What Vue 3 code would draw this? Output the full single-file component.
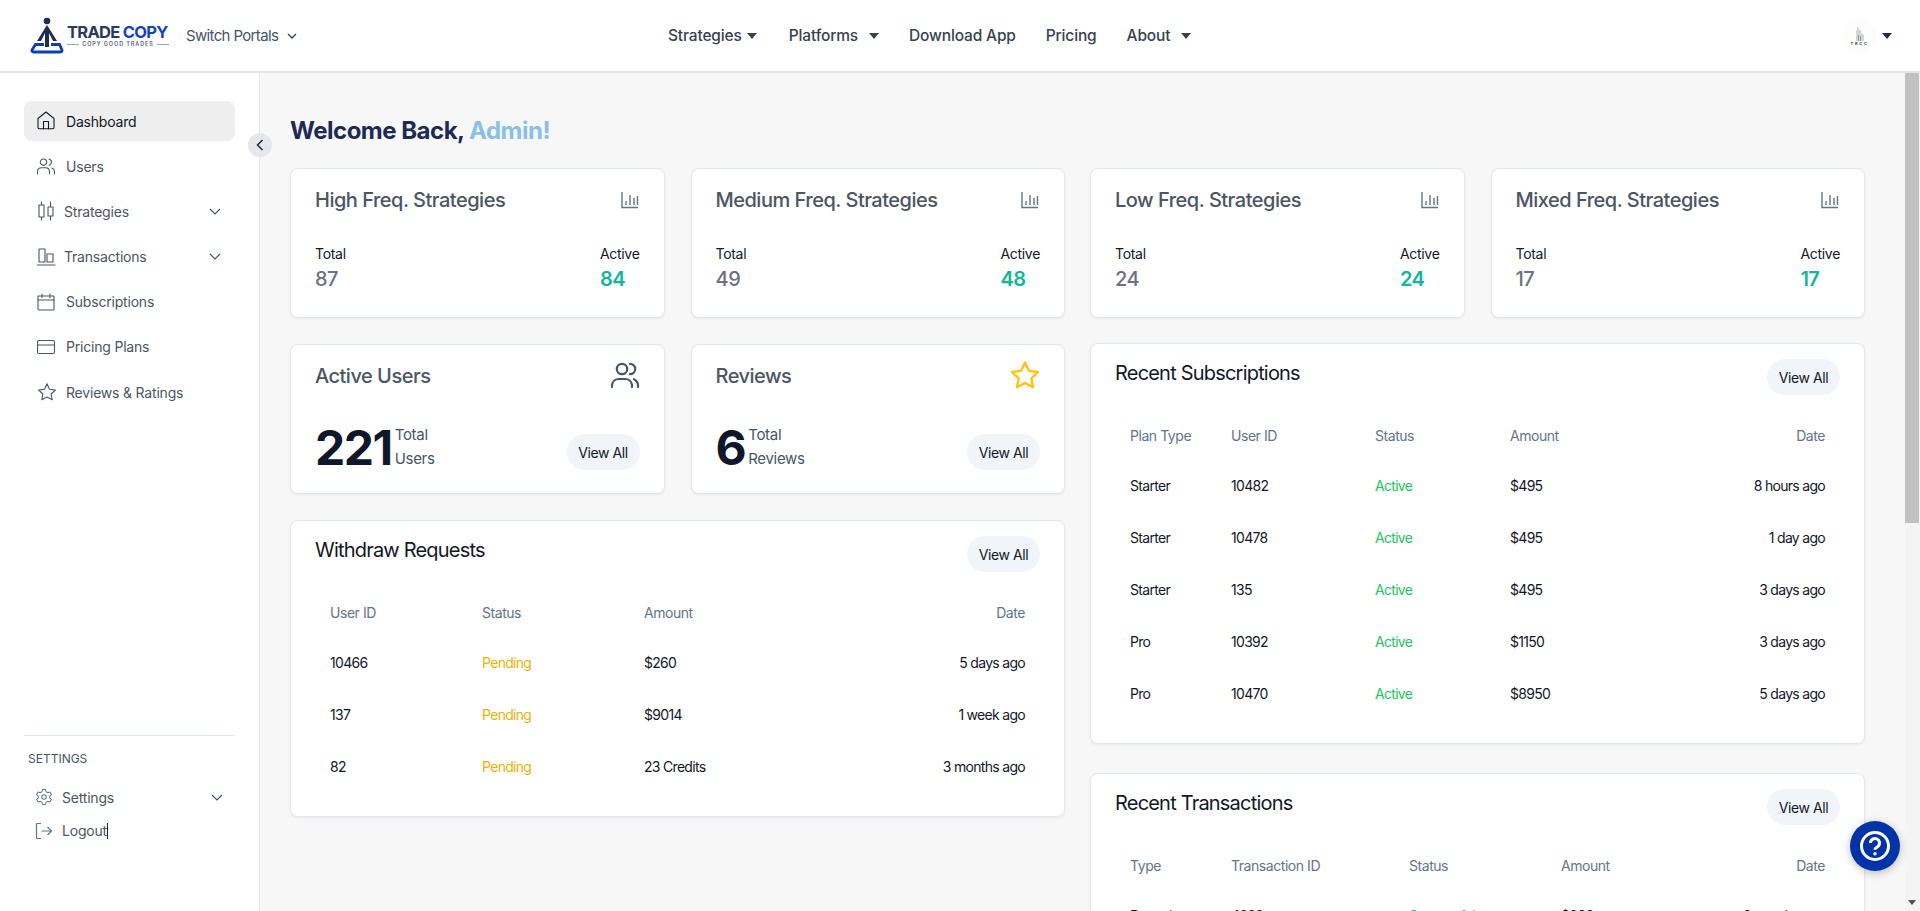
<template>
  <div class="app">
    <header class="topbar">
      <div class="brand">
        <svg class="logo-mark" width="36" height="38" viewBox="29 17 36 38" fill="none">
          <circle cx="47" cy="21" r="3.300" fill="#1c2c55" />
          <path d="M47 25 L57 41 H53 L49 33 V47 H45 V33 L41 41 H37 Z" fill="#1c2c55" />
          <path d="M44 44.500 H35.500 L32 50 Q31.500 52 33.500 52 H60.500 Q62.500 52 62 50 L59.500 44.500 H51" stroke="#0f3fb5" stroke-width="2.800" fill="none" />
        </svg>
        <div class="logo-text">
          <div class="logo-name"><span class="navy">TRADE</span> <span class="blue">COPY</span></div>
          <div class="logo-tag"><i></i><span>COPY GOOD TRADES</span><i></i></div>
        </div>
        <div class="portal">
          Switch Portals
          <svg width="10" height="6" viewBox="0 0 10 6" fill="none" stroke="#334155" stroke-width="1.3"><path d="M1 1l4 4 4-4" /></svg>
        </div>
      </div>
      <nav class="topnav">
        <a class="tight">Strategies<b class="caret"></b></a>
        <a>Platforms<b class="caret"></b></a>
        <a>Download App</a>
        <a>Pricing</a>
        <a>About<b class="caret"></b></a>
      </nav>
      <div class="profile">
        <div class="avatar">
          <svg width="12" height="15" viewBox="0 0 12 15"><path d="M3 15V5l1-1V0l4 5 1 3 2 1v6z" fill="#d4d4d4" /><path d="M5 15V9h1v6zM7 15v-5h1v5z" fill="#999" /></svg>
          <span>T R C C</span>
        </div>
        <b class="caret dark"></b>
      </div>
    </header>

    <div class="body">
      <aside class="sidebar">
        <div class="menu">
          <a v-for="item in menu" :key="item.label" class="menu-item" :class="{ active: item.active, narrow: item.narrow }">
            <svg class="menu-icon" width="20" height="20" viewBox="0 0 20 20" fill="none" stroke="currentColor" stroke-width="1.1" stroke-linecap="round" stroke-linejoin="round">
              <path v-for="d in icons[item.icon]" :key="d" :d="d" />
            </svg>
            <span>{{ item.label }}</span>
            <svg v-if="item.more" class="chev" width="12" height="7" viewBox="0 0 12 7" fill="none" stroke="#475569" stroke-width="1.2"><path d="M1 1l5 5 5-5" /></svg>
          </a>
        </div>
        <div class="side-foot">
          <div class="side-label">SETTINGS</div>
          <a class="foot-item">
            <svg width="18" height="18" viewBox="0 0 24 24" fill="none" stroke="#64748b" stroke-width="1.4" stroke-linejoin="round"><circle cx="12" cy="12" r="3" /><path d="M10 2h4l.7 3 2.2 1.2 3-.9 2 3.4-2.2 2.2v2.2l2.2 2.2-2 3.4-3-.9-2.2 1.2-.7 3h-4l-.7-3-2.2-1.2-3 .9-2-3.4 2.2-2.2v-2.2L2.100 8.700l2-3.400 3 .9L9.300 5z" /></svg>
            <span>Settings</span>
            <svg class="chev" width="12" height="7" viewBox="0 0 12 7" fill="none" stroke="#475569" stroke-width="1.2"><path d="M1 1l5 5 5-5" /></svg>
          </a>
          <a class="foot-item">
            <svg width="18" height="18" viewBox="0 0 18 18" fill="none" stroke="#64748b" stroke-width="1.2"><path d="M6 1.500H2.500a1 1 0 0 0-1 1v13a1 1 0 0 0 1 1H6M6.500 9H16.500M12.500 5l4 4-4 4" /></svg>
            <span class="cursor">Logout</span>
          </a>
        </div>
        <button class="collapse">
          <svg width="8" height="12" viewBox="0 0 8 12" fill="none" stroke="#1e293b" stroke-width="1.5"><path d="M6.500 1l-5 5 5 5" /></svg>
        </button>
      </aside>

      <main class="main">
        <h1 class="welcome">Welcome Back, <span>Admin!</span></h1>
        <div class="columns">
          <div class="col">
            <div class="stat-row">
              <StatCard v-for="s in stats.slice(0, 2)" :key="s.title" :stat="s" />
            </div>
            <div class="stat-row">
              <div v-for="b in bigCards" :key="b.title" class="card big-card">
                <div class="card-top">
                  <h3 class="stat-title">{{ b.title }}</h3>
                  <svg v-if="b.icon === 'users'" class="big-icon" width="30" height="30" viewBox="0 0 30 30" fill="none" stroke="#475569" stroke-width="2.200" stroke-linecap="round"><circle cx="12" cy="9" r="5.200" /><path d="M2 27v-2a7 7 0 0 1 7-6h6a7 7 0 0 1 7 6v2M20 3.800a5.200 5.200 0 0 1 0 10.400M24 19.200a7 7 0 0 1 4 5.800v2" /></svg>
                  <svg v-else class="big-icon" width="30" height="30" viewBox="0 0 30 30" fill="none" stroke="#fac515" stroke-width="2.400" stroke-linejoin="round"><path d="M15 2.500l3.900 8.300 9.100 1.200-6.700 6.300 1.700 9-8-4.400-8 4.400 1.700-9L2 12l9.100-1.200z" /></svg>
                </div>
                <div class="big-bottom">
                  <div class="big-num">{{ b.value }}</div>
                  <div class="big-label">Total<br />{{ b.label }}</div>
                  <button class="view-all">View All</button>
                </div>
              </div>
            </div>
            <DataCard title="Withdraw Requests" :columns="withdrawCols" :rows="withdraws" :widths="'152px 162px 1fr 200px'" />
          </div>
          <div class="col col-right">
            <div class="stat-row">
              <StatCard v-for="s in stats.slice(2)" :key="s.title" :stat="s" />
            </div>
            <DataCard title="Recent Subscriptions" :columns="subCols" :rows="subscriptions" :widths="'101px 144px 135px 1fr 200px'" />
            <DataCard title="Recent Transactions" :columns="txCols" :rows="transactions" :widths="'101px 178px 152px 1fr 200px'" />
          </div>
        </div>
      </main>

      <div class="rail">
        <div class="thumb"></div>
        <b class="rail-arrow"></b>
      </div>
    </div>

    <button class="help">
      <svg width="32" height="32" viewBox="0 0 32 32" fill="none" stroke="#fff"><circle cx="16" cy="16" r="13.500" stroke-width="3" /><path d="M11.500 13a4.500 4.500 0 1 1 7 3.700c-1.600 1-2.500 1.600-2.500 3" stroke-width="3" /><circle cx="16" cy="23.800" r="1.700" fill="#fff" stroke="none" /></svg>
    </button>
  </div>
</template>

<script setup>
import { h } from 'vue'

const icons = {
  home: ['M1 7.500 9 1l8 6.500v9a1.200 1.200 0 0 1-1.200 1.200H2.200A1.200 1.200 0 0 1 1 16.500z', 'M6.500 17.700V10.500h5v7.200'],
  users: ['M6.500 3a3.200 3.200 0 1 0 0 6.400 3.200 3.200 0 0 0 0-6.400z', 'M.5 18v-2.500a4 4 0 0 1 4-3.800h4a4 4 0 0 1 4 3.800V18', 'M12 3a3.200 3.200 0 0 1 0 6.200', 'M15 12a4 4 0 0 1 2.500 3.500V18'],
  candles: ['M4.500 1v3M4.500 16v3M2 4h5v12H2zM13.500 1v5M13.500 15v4M11 6h5v9h-5z'],
  bars: ['M0.500 18h17.500', 'M2 2h6v13H2z', 'M10 7h6v8h-6z'],
  calendar: ['M1.500 4h15a.5.5 0 0 1 .500.5V17a1 1 0 0 1-1 1H2a1 1 0 0 1-1-1V4.500a.5.500 0 0 1 .5-.5z', 'M1 8h16', 'M5 2v3.500M13 2v3.500'],
  card: ['M2 3.500h14a1.500 1.500 0 0 1 1.500 1.500v10a1.500 1.500 0 0 1-1.500 1.500H2A1.500 1.500 0 0 1 .5 15V5A1.500 1.500 0 0 1 2 3.500z', 'M.5 8h17'],
  star: ['M10 1.800l2.500 5.400 5.900.8-4.300 4 1.100 5.800L10 15.100l-5.200 2.700 1.100-5.800-4.300-4 5.900-.8z'],
}

const menu = [
  { label: 'Dashboard', icon: 'home', active: true },
  { label: 'Users', icon: 'users' },
  { label: 'Strategies', icon: 'candles', more: true, narrow: true },
  { label: 'Transactions', icon: 'bars', more: true, narrow: true },
  { label: 'Subscriptions', icon: 'calendar' },
  { label: 'Pricing Plans', icon: 'card' },
  { label: 'Reviews & Ratings', icon: 'star' },
]

const stats = [
  { title: 'High Freq. Strategies', total: 87, active: 84 },
  { title: 'Medium Freq. Strategies', total: 49, active: 48 },
  { title: 'Low Freq. Strategies', total: 24, active: 24 },
  { title: 'Mixed Freq. Strategies', total: 17, active: 17 },
]

const bigCards = [
  { title: 'Active Users', value: 221, label: 'Users', icon: 'users' },
  { title: 'Reviews', value: 6, label: 'Reviews', icon: 'star' },
]

const withdrawCols = ['User ID', 'Status', 'Amount', 'Date']
const withdraws = [
  ['10466', { text: 'Pending', tone: 'pending' }, '$260', '5 days ago'],
  ['137', { text: 'Pending', tone: 'pending' }, '$9014', '1 week ago'],
  ['82', { text: 'Pending', tone: 'pending' }, '23 Credits', '3 months ago'],
]

const subCols = ['Plan Type', 'User ID', 'Status', 'Amount', 'Date']
const subscriptions = [
  ['Starter', '10482', { text: 'Active', tone: 'ok' }, '$495', '8 hours ago'],
  ['Starter', '10478', { text: 'Active', tone: 'ok' }, '$495', '1 day ago'],
  ['Starter', '135', { text: 'Active', tone: 'ok' }, '$495', '3 days ago'],
  ['Pro', '10392', { text: 'Active', tone: 'ok' }, '$1150', '3 days ago'],
  ['Pro', '10470', { text: 'Active', tone: 'ok' }, '$8950', '5 days ago'],
]

const txCols = ['Type', 'Transaction ID', 'Status', 'Amount', 'Date']
const transactions = [
  ['Deposit', '4382', { text: 'Successful', tone: 'ok' }, '$800', '2 months ago'],
]

const StatCard = (props) =>
  h('div', { class: 'card stat-card' }, [
    h('div', { class: 'card-top' }, [
      h('h3', { class: 'stat-title' }, props.stat.title),
      h('svg', { class: 'stat-icon', width: 18, height: 18, viewBox: '0 0 18 18', fill: 'none', stroke: '#64748b', 'stroke-width': 1.4 }, [
        h('path', { d: 'M1 1v15.500h16M5 14v-4M9 14V4M13 14V7M16.500 14V5' }),
      ]),
    ]),
    h('div', { class: 'stat-nums' }, [
      h('div', [h('div', { class: 'stat-label' }, 'Total'), h('div', { class: 'stat-val' }, props.stat.total)]),
      h('div', [h('div', { class: 'stat-label' }, 'Active'), h('div', { class: 'stat-val teal' }, props.stat.active)]),
    ]),
  ])
StatCard.props = ['stat']

const DataCard = (props) =>
  h('div', { class: 'card data-card' }, [
    h('div', { class: 'data-head' }, [
      h('h3', { class: 'data-title' }, props.title),
      h('button', { class: 'view-all' }, 'View All'),
    ]),
    h('div', { class: 'table' }, [
      h('div', { class: 'tr th', style: { gridTemplateColumns: props.widths } },
        props.columns.map((c) => h('div', c))),
      ...props.rows.map((row, i) =>
        h('div', { key: i, class: 'tr', style: { gridTemplateColumns: props.widths } },
          row.map((cell) =>
            typeof cell === 'object' ? h('div', { class: cell.tone }, cell.text) : h('div', cell)))),
    ]),
  ])
DataCard.props = ['title', 'columns', 'rows', 'widths']
</script>

<style>
html, body { margin: 0; height: 100%; overflow: hidden; }
.card { background: #fff; border: 1px solid #e2e8f0; border-radius: 8px; box-shadow: 0 1px 3px rgba(15, 23, 42, 0.06); box-sizing: border-box; }
.card-top { display: flex; justify-content: space-between; align-items: flex-start; }
.stat-row { display: grid; grid-template-columns: 1fr 1fr; gap: 26px; }
.stat-card { height: 150px; padding: 17px 24px 20px; display: flex; flex-direction: column; justify-content: space-between; }
.stat-title { margin: 0; font-size: 20px; font-weight: 500; line-height: 28px; color: #4b5563; letter-spacing: -0.5px; }
.stat-icon { margin: 5px 1px 0 0; }
.stat-nums { display: flex; justify-content: space-between; padding-bottom: 4px; }
.stat-label { font-size: 14px; line-height: 20px; color: #111827; letter-spacing: -0.3px; }
.stat-val { font-size: 20px; line-height: 28px; font-weight: 500; color: #6b7280; letter-spacing: -0.5px; margin-top: 1px; }
.stat-val.teal { color: #10b798; font-weight: 600; }
.view-all { height: 36px; width: 73px; padding: 0; border: 0; border-radius: 18px; background: #f1f4f9; color: #111827; font: 14px Inter, sans-serif; letter-spacing: -0.4px; flex: none; }
.data-card { padding: 15px 24px 24px; }
.data-head { display: flex; justify-content: space-between; align-items: flex-start; }
.data-title { margin: 0; font-size: 20px; font-weight: 400; line-height: 28px; color: #111827; letter-spacing: -0.8px; }
.table { margin-top: 13px; padding: 0 15px; }
.tr { display: grid; height: 52px; align-items: center; font-size: 14px; color: #111827; letter-spacing: -0.7px; white-space: nowrap; }
.tr > div:last-child { text-align: right; }
.tr.th { color: #64748b; height: 51px; padding-top: 3px; box-sizing: border-box; letter-spacing: -0.45px; }
.col-right .data-card + .data-card { margin-top: 4px; }
.ok { color: #22c55e; }
.pending { color: #eab308; }
</style>

<style scoped>
.app { height: 911px; display: flex; flex-direction: column; font-family: Inter, "Liberation Sans", sans-serif; }
.topbar { height: 73px; flex: none; box-sizing: border-box; border-bottom: 2px solid #e5e7eb; display: flex; align-items: center; padding: 0 28px 0 29px; background: #fff; }
.brand { display: flex; align-items: center; width: 639px; flex: none; }
.logo-mark { flex: none; margin-right: 2px; }
.logo-text { width: 102px; margin-right: 17px; }
.logo-name { font-size: 16.500px; font-weight: 700; line-height: 17px; letter-spacing: -0.7px; white-space: nowrap; }
.navy { color: #2a3a5e; }
.blue { color: #1344b8; }
.logo-tag { display: flex; align-items: center; gap: 3px; font-size: 5.500px; font-weight: 600; color: #5a6478; letter-spacing: 0.9px; line-height: 7px; white-space: nowrap; }
.logo-tag i { flex: 1; height: 1px; background: #9aa3b5; }
.portal { display: flex; align-items: center; gap: 9px; font-size: 15px; color: #475569; letter-spacing: -0.65px; white-space: nowrap; }
.topnav { display: flex; align-items: center; gap: 30px; flex: 1; font-size: 15.500px; font-weight: 500; color: #374151; letter-spacing: -0.15px; }
.topnav a { display: flex; align-items: center; gap: 11px; white-space: nowrap; }
.topnav a.tight { gap: 5px; margin-right: 2px; }
.caret { width: 0; height: 0; border-left: 5px solid transparent; border-right: 5px solid transparent; border-top: 6px solid #374151; }
.caret.dark { border-top-color: #1e2a55; }
.profile { display: flex; align-items: center; gap: 6px; }
.avatar { width: 34px; height: 34px; border-radius: 50%; background: #fcfcfc; display: flex; flex-direction: column; align-items: center; justify-content: center; }
.avatar span { font-size: 4px; line-height: 5px; color: #444; font-weight: 700; white-space: nowrap; letter-spacing: 0.4px; }
.body { flex: 1; min-height: 0; display: flex; }
.sidebar { width: 260px; flex: none; box-sizing: border-box; border-right: 1px solid #e5e7eb; background: #fff; padding: 28px 24px 63px; display: flex; flex-direction: column; justify-content: space-between; position: relative; }
.menu { display: flex; flex-direction: column; gap: 5.200px; }
.menu-item { display: flex; align-items: center; height: 40px; padding: 0 14px 0 13px; gap: 9px; border-radius: 8px; font-size: 14px; color: #4b5563; letter-spacing: -0.2px; }
.menu-item.narrow { gap: 7px; }
.menu-item.active { background: #eeeeee; color: #111827; }
.menu-item .chev, .foot-item .chev { margin-left: auto; }
.menu-icon { flex: none; }
.side-foot { border-top: 1px solid #e2e8f0; padding-top: 15px; }
.side-label { font-size: 12px; line-height: 16px; color: #4b5563; padding-left: 4px; margin-bottom: 13px; }
.foot-item { display: flex; align-items: center; gap: 9px; height: 34px; padding: 0 12px 0 11px; font-size: 14px; color: #4b5563; letter-spacing: -0.2px; }
.cursor { border-right: 1px solid #1e293b; line-height: 16px; }
.collapse { position: absolute; top: 60px; left: 248px; width: 24px; height: 24px; padding: 0; border: 0; border-radius: 50%; background: #e5e7ec; display: flex; align-items: center; justify-content: center; }
.main { flex: 1; min-width: 0; overflow: hidden; background: #f7f7f7; padding: 36px 40px 0 30px; box-sizing: border-box; }
.rail { width: 15px; flex: none; background: #f4f4f4; position: relative; }
.thumb { width: 14px; height: 450px; background: #c1c1c1; }
.rail-arrow { position: absolute; left: 3px; bottom: 6px; width: 0; height: 0; border-left: 4px solid transparent; border-right: 4px solid transparent; border-top: 5px solid #505050; }
.welcome { margin: 0 0 15px; font-size: 24px; line-height: 44px; font-weight: 700; color: #1e2a55; letter-spacing: -0.5px; }
.welcome span { color: #8bbfe8; }
.columns { display: grid; grid-template-columns: 1fr 1fr; gap: 25px; align-items: start; }
.col { display: flex; flex-direction: column; gap: 26px; }
.col-right { gap: 25px; }
.big-card { height: 150px; padding: 17px 24px 12px; display: flex; flex-direction: column; justify-content: space-between; }
.big-icon { margin: -2px 0 0; }
.big-bottom { display: flex; align-items: center; }
.big-num { font-size: 48px; line-height: 50px; font-weight: 700; color: #0f172a; letter-spacing: -1.500px; margin: 0 3px 8px 0; }
.big-label { font-size: 15px; line-height: 24px; color: #475569; letter-spacing: -0.3px; flex: 1; margin-bottom: 10px; }
.help { position: fixed; left: 1850px; top: 821px; width: 50px; height: 50px; padding: 0; border: 0; border-radius: 50%; background: #0033a8; box-shadow: 0 2px 8px rgba(0, 0, 0, 0.25); display: flex; align-items: center; justify-content: center; }
</style>
